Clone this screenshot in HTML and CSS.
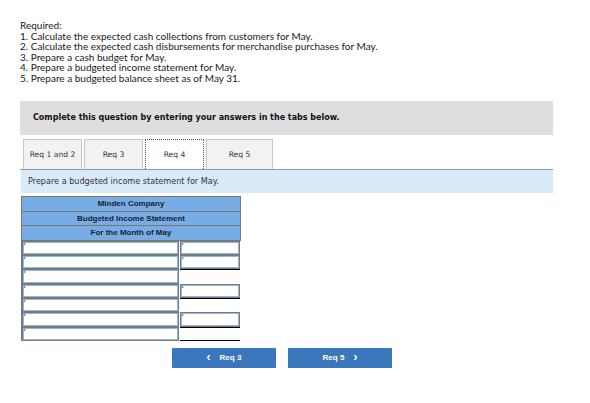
FILE: index.html
```html
<!DOCTYPE html>
<html>
<head>
<meta charset="utf-8">
<link rel="stylesheet" href="styles.css">
</head>
<body>
<div class="page">
  <div class="required">
    <div>Required:</div>
    <div>1. Calculate the expected cash collections from customers for May.</div>
    <div>2. Calculate the expected cash disbursements for merchandise purchases for May.</div>
    <div>3. Prepare a cash budget for May.</div>
    <div>4. Prepare a budgeted income statement for May.</div>
    <div>5. Prepare a budgeted balance sheet as of May 31.</div>
  </div>

  <div class="instructions">Complete this question by entering your answers in the tabs below.</div>

  <div class="tabs">
    <div class="tab">Req 1 and 2</div>
    <div class="tab">Req 3</div>
    <div class="tab active">Req 4</div>
    <div class="tab">Req 5</div>
  </div>
  <div class="prompt">Prepare a budgeted income statement for May.</div>

  <div class="stmt">
    <div class="hdr tall">Minden Company</div>
    <div class="hdr">Budgeted Income Statement</div>
    <div class="hdr tall">For the Month of May</div>
    <div class="rows">
      <div class="inp"><span class="mark"></span></div><div class="inp"><span class="mark"></span></div>
      <div class="inp"><span class="mark"></span></div><div class="inp"><span class="mark"></span></div>
      <div class="inp"><span class="mark"></span></div><div class="total"></div>
      <div class="inp"><span class="mark"></span></div><div class="inp"><span class="mark"></span></div>
      <div class="inp"><span class="mark"></span></div><div class="total"></div>
      <div class="inp"><span class="mark"></span></div><div class="inp"><span class="mark"></span></div>
      <div class="inp"><span class="mark"></span></div><div class="total last"></div>
    </div>
  </div>

  <div class="nav">
    <button class="btn"><span class="chev">&#8249;</span>Req 3</button>
    <button class="btn">Req 5<span class="chev right">&#8250;</span></button>
  </div>
</div>
</body>
</html>
```

FILE: styles.css
```css
html, body {
  margin: 0;
  padding: 0;
  background: #fff;
}

.page {
  width: 533px;
  margin-left: 20px;
  padding-top: 20px;
}

.required {
  font-family: Lato, "Open Sans", sans-serif;
  font-size: 10px;
  line-height: 10.6px;
  color: #1a1a1a;
}

.instructions {
  margin-top: 17px;
  height: 34px;
  background: #dedede;
  display: flex;
  align-items: center;
  padding-left: 13px;
  font-family: "DejaVu Sans", Verdana, sans-serif;
  font-weight: bold;
  font-size: 8px;
  color: #111;
}

.tabs {
  margin-top: 4px;
  display: flex;
  gap: 2px;
  padding-left: 3px;
  border-bottom: 1px solid #999;
}

.tab {
  width: 57px;
  height: 29px;
  background: #f2f2f2;
  border: 1px solid #c6c6c6;
  border-bottom: none;
  display: flex;
  align-items: center;
  justify-content: center;
  font-family: "DejaVu Sans", Verdana, sans-serif;
  font-size: 7.6px;
  color: #333;
}

.tab.active {
  background: #fff;
  border: 1px dotted #2e5f9e;
  border-bottom: none;
}

.tab:last-child {
  width: 65px;
}

.prompt {
  height: 23px;
  margin-left: 1px;
  background: #d9ebf9;
  display: flex;
  align-items: center;
  padding-left: 7px;
  font-family: "DejaVu Sans", Verdana, sans-serif;
  font-size: 8.1px;
  color: #333;
}

.stmt {
  margin-top: 3px;
  margin-left: 1px;
  width: 220px;
}

.hdr {
  height: 13px;
  background: #78ace4;
  border: 1px solid #777;
  border-bottom: none;
  display: flex;
  align-items: center;
  justify-content: center;
  font-family: "Liberation Sans", Arial, sans-serif;
  font-size: 8px;
  font-weight: bold;
  color: #1c1c2c;
}

.hdr.tall {
  height: 14px;
}

.rows {
  display: grid;
  grid-template-columns: 157px 60px;
  grid-template-rows: 14px 14px 15px 14px 14px 15px 14px;
  column-gap: 1px;
  border-left: 1px solid #777;
  border-top: 1px solid #777;
  padding-right: 1px;
}

.inp {
  position: relative;
  border: 1px solid #7a7a7a;
  box-shadow: inset 0 0 0 1px #93b6e0;
  background: #fff;
}

.mark {
  position: absolute;
  left: 1px;
  top: 1px;
  width: 0;
  height: 0;
  border-top: 1.5px solid transparent;
  border-bottom: 1.5px solid transparent;
  border-left: 2.5px solid #2d6fc4;
}

.total {
  border-top: 1px solid #000;
  background: #fff;
}

.total.last {
  border-bottom: 1px solid #000;
}

.nav {
  margin-top: 7px;
  padding-left: 152px;
  display: flex;
  gap: 12px;
}

.btn {
  width: 104px;
  height: 20px;
  border: none;
  border-radius: 1px;
  background: #3a76bb;
  color: #fff;
  font-family: "Liberation Sans", Arial, sans-serif;
  font-weight: bold;
  font-size: 8px;
  display: flex;
  align-items: center;
  justify-content: center;
  padding: 0;
}

.chev {
  font-size: 12px;
  font-weight: bold;
  margin-right: 9px;
  line-height: 1;
  position: relative;
  top: -1px;
}

.chev.right {
  margin-right: 0;
  margin-left: 9px;
}
```
